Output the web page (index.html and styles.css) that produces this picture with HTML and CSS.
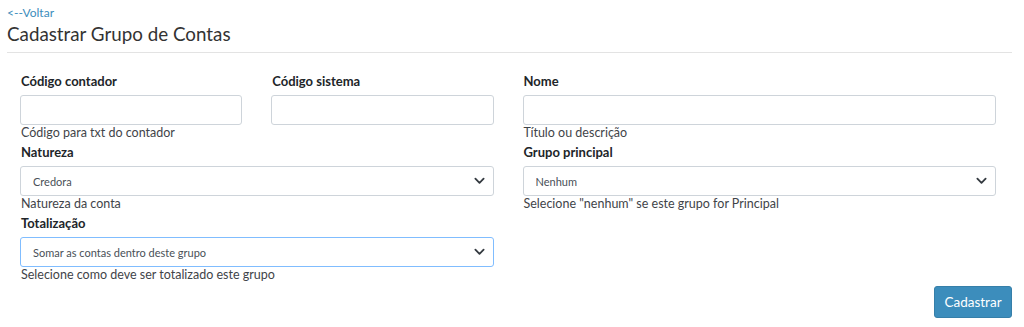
FILE: index.html
```html
<!DOCTYPE html>
<html lang="pt-BR">
<head>
<meta charset="utf-8">
<title>Cadastrar Grupo de Contas</title>
<link rel="stylesheet" href="styles.css">
</head>
<body>
<div class="page">
  <a class="back" href="#">&lt;--Voltar</a>
  <h1 class="title">Cadastrar Grupo de Contas</h1>
  <form class="form">
    <div class="field">
      <label class="label">Código contador</label>
      <input class="control" type="text">
      <span class="help">Código para txt do contador</span>
    </div>
    <div class="field">
      <label class="label">Código sistema</label>
      <input class="control" type="text">
    </div>
    <div class="field span2">
      <label class="label">Nome</label>
      <input class="control" type="text">
      <span class="help">Título ou descrição</span>
    </div>
    <div class="field span2">
      <label class="label">Natureza</label>
      <div class="select-wrap">
        <select class="control select"><option>Credora</option></select>
        <svg class="chev" viewBox="0 0 12 8" width="11" height="8"><path d="M1.5 1.5 L6 6 L10.5 1.5" fill="none" stroke="#343a40" stroke-width="2" stroke-linecap="round" stroke-linejoin="round"/></svg>
      </div>
      <span class="help">Natureza da conta</span>
    </div>
    <div class="field span2">
      <label class="label">Grupo principal</label>
      <div class="select-wrap">
        <select class="control select"><option>Nenhum</option></select>
        <svg class="chev" viewBox="0 0 12 8" width="11" height="8"><path d="M1.5 1.5 L6 6 L10.5 1.5" fill="none" stroke="#343a40" stroke-width="2" stroke-linecap="round" stroke-linejoin="round"/></svg>
      </div>
      <span class="help">Selecione "nenhum" se este grupo for Principal</span>
    </div>
    <div class="field span2">
      <label class="label">Totalização</label>
      <div class="select-wrap">
        <select class="control select focus"><option>Somar as contas dentro deste grupo</option></select>
        <svg class="chev" viewBox="0 0 12 8" width="11" height="8"><path d="M1.5 1.5 L6 6 L10.5 1.5" fill="none" stroke="#343a40" stroke-width="2" stroke-linecap="round" stroke-linejoin="round"/></svg>
      </div>
      <span class="help">Selecione como deve ser totalizado este grupo</span>
    </div>
  </form>
  <div class="actions">
    <button class="btn" type="button">Cadastrar</button>
  </div>
</div>
</body>
</html>
```

FILE: styles.css
```css
* { box-sizing: border-box; }
html, body { margin: 0; padding: 0; background: #fff; }
body {
  font-family: "Lato", "Noto Sans", sans-serif;
  color: #212529;
  font-size: 13px;
}
.page {
  padding: 5px 12px 0 7px;
}
.back {
  display: block;
  color: #3c8dbc;
  text-decoration: none;
  font-size: 12px;
  line-height: 16px;
}
.title {
  margin: 0;
  font-weight: 400;
  font-size: 18.8px;
  line-height: 26px;
  color: #333;
  padding-bottom: 5px;
  border-bottom: 1px solid #e3e3e3;
}
.form {
  display: grid;
  grid-template-columns: repeat(4, 1fr);
  column-gap: 29px;
  padding: 20px 16px 0 13px;
}
.field {
  display: flex;
  flex-direction: column;
  align-items: stretch;
}
.span2 { grid-column: span 2; }
.label {
  font-weight: 700;
  font-size: 13px;
  line-height: 16px;
  color: #212529;
  margin-bottom: 6px;
  padding-left: 1px;
}
.control {
  height: 30px;
  border: 1px solid #ced4da;
  border-radius: 3px;
  background: #fff;
  font-family: inherit;
  width: 100%;
  margin: 0;
}
.select-wrap { position: relative; }
.select {
  appearance: none;
  -webkit-appearance: none;
  padding: 0 30px 0 12px;
  font-size: 11px;
  color: #495057;
}
.select.focus { border-color: #80bdff; }
.chev {
  position: absolute;
  right: 9px;
  top: 11px;
  pointer-events: none;
}
.help {
  font-size: 12.5px;
  line-height: 16px;
  color: #3f4449;
  padding-left: 1px;
  margin-bottom: 3px;
}
.actions {
  display: flex;
  justify-content: flex-end;
  padding-top: 0;
}
.btn {
  background: #3c8dbc;
  border: 1px solid #367fa9;
  color: #fff;
  border-radius: 3px;
  font-family: inherit;
  font-size: 13.5px;
  height: 32px;
  width: 78px;
  padding: 0;
}
```
